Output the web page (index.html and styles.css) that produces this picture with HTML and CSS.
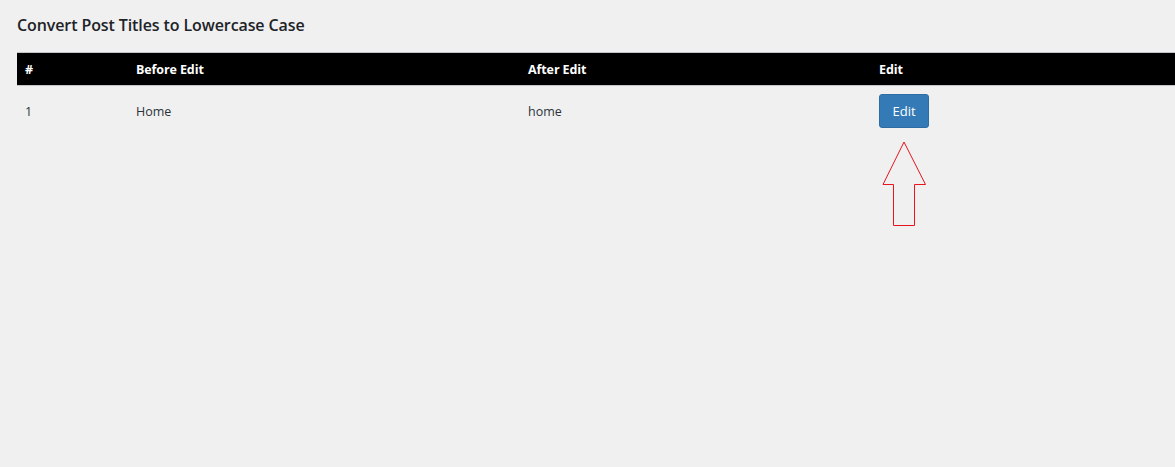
FILE: index.html
```html
<!DOCTYPE html>
<html>
<head>
<meta charset="utf-8">
<link rel="stylesheet" href="styles.css">
</head>
<body>
<div class="wrap">
  <h1 class="title">Convert Post Titles to Lowercase Case</h1>
  <table class="list">
    <thead>
      <tr>
        <th class="c-num">#</th>
        <th class="c-before">Before Edit</th>
        <th class="c-after">After Edit</th>
        <th class="c-edit">Edit</th>
      </tr>
    </thead>
    <tbody>
      <tr>
        <td>1</td>
        <td>Home</td>
        <td>home</td>
        <td><button class="btn">Edit</button></td>
      </tr>
    </tbody>
  </table>
</div>
<svg class="arrow" width="1175" height="467" viewBox="0 0 1175 467">
  <polygon points="904,142 925.5,184.5 914.5,184.5 914.5,225.5 893.5,225.5 893.5,184.5 883,184.5" fill="none" stroke="#e8141e" stroke-width="1"/>
</svg>
</body>
</html>
```

FILE: styles.css
```css
html, body {
  margin: 0;
  padding: 0;
}
body {
  background: #f0f0f1;
  font-family: "Open Sans", "Noto Sans", sans-serif;
  color: #1d2327;
  width: 1175px;
  height: 467px;
  overflow: hidden;
  position: relative;
}
.wrap {
  padding: 13px 0 0 17px;
}
.title {
  font-size: 16px;
  font-weight: 600;
  margin: 0 0 15px 0;
  line-height: 24px;
  letter-spacing: -0.1px;
  color: #1d2327;
}
.list {
  border-collapse: collapse;
  width: 1158px;
  font-size: 12.5px;
}
.list thead tr {
  background: #000;
  border-top: 1px solid #c3c4c7;
  border-bottom: 1px solid #c3c4c7;
}
.list th {
  color: #fff;
  font-weight: 700;
  text-align: left;
  height: 33px;
  padding: 0 8px;
  box-sizing: border-box;
  letter-spacing: -0.1px;
}
.c-num { width: 111px; }
.c-before { width: 392px; }
.c-after { width: 351px; }
.list td {
  padding: 8px 8px 7px;
  vertical-align: middle;
  color: #2c3338;
}
.btn {
  background: #337ab7;
  color: #fff;
  border: 1px solid #2e6da4;
  border-radius: 3px;
  font-family: "Open Sans", "Noto Sans", sans-serif;
  font-size: 13px;
  width: 50px;
  height: 34px;
  padding: 0;
  cursor: pointer;
}
.arrow {
  position: absolute;
  left: 0;
  top: 0;
  pointer-events: none;
}
```
